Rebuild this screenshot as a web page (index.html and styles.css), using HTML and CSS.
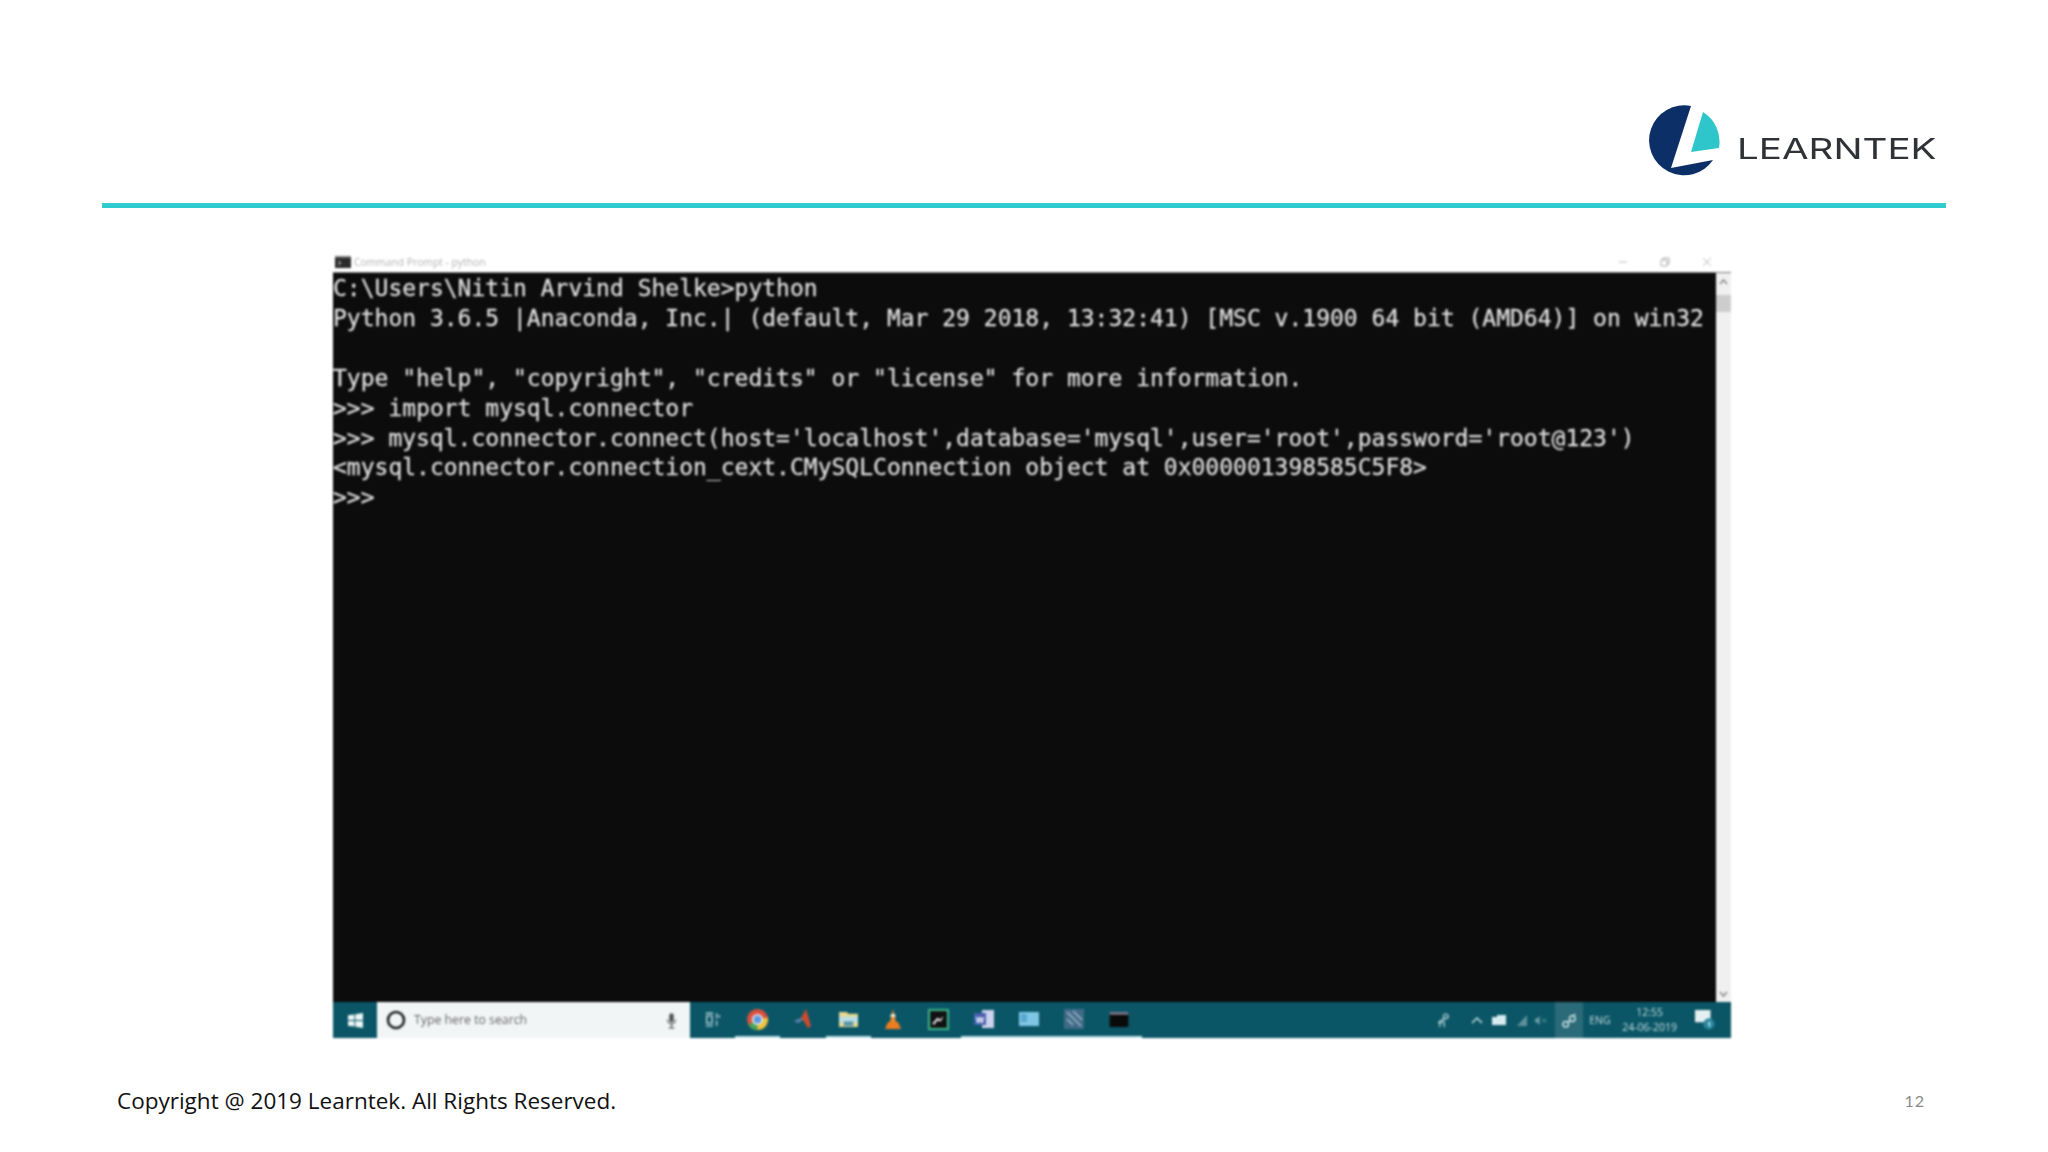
FILE: index.html
```html
<!DOCTYPE html>
<html lang="en">
<head>
<meta charset="utf-8">
<title>Learntek slide</title>
<link rel="stylesheet" href="styles.css">
</head>
<body>
<div class="slide">
  <header class="head">
    <div class="logo">
      <svg class="logo-mark" viewBox="0 0 72 72" width="72" height="72">
        <path fill="#0b2f66" d="M42 1A35 35 0 1 0 64 55L22 63Z"/>
        <path fill="#2fc6cb" d="M54 7A35 35 0 0 1 70 43L42 47Z"/>
      </svg>
      <span class="logo-text">LEARNTEK</span>
    </div>
  </header>
  <div class="rule"></div>

  <main class="shot-wrap">
    <div class="shot">
      <div class="titlebar">
        <svg class="cmd-icon" viewBox="0 0 16 12" width="16" height="12">
          <rect width="16" height="12" fill="#2a2a2a"/><rect y="0" width="16" height="2" fill="#777"/>
          <path d="M3 5l3 2-3 2" stroke="#ccc" stroke-width="1" fill="none"/>
        </svg>
        <span class="title-text">Command Prompt - python</span>
        <div class="win-ctrls">
          <svg viewBox="0 0 12 12" width="12" height="12"><path d="M2 6h8" stroke="#bbb"/></svg>
          <svg viewBox="0 0 12 12" width="12" height="12"><path d="M2 4h6v6H2zM4 4V2h6v6H8" stroke="#aaa" fill="none"/></svg>
          <svg viewBox="0 0 12 12" width="12" height="12"><path d="M2 2l8 8M10 2l-8 8" stroke="#bbb"/></svg>
        </div>
      </div>
      <div class="console">
        <pre class="terminal">C:\Users\Nitin Arvind Shelke&gt;python
Python 3.6.5 |Anaconda, Inc.| (default, Mar 29 2018, 13:32:41) [MSC v.1900 64 bit (AMD64)] on win32

Type "help", "copyright", "credits" or "license" for more information.
&gt;&gt;&gt; import mysql.connector
&gt;&gt;&gt; mysql.connector.connect(host='localhost',database='mysql',user='root',password='root@123')
&lt;mysql.connector.connection_cext.CMySQLConnection object at 0x000001398585C5F8&gt;
&gt;&gt;&gt;</pre>
        <div class="scrollbar">
          <svg viewBox="0 0 15 16" width="15" height="16"><path d="M4 10l3.500-4 3.500 4" stroke="#888" stroke-width="1.500" fill="none"/></svg>
          <div class="thumb"></div>
          <svg class="arrow-down" viewBox="0 0 15 16" width="15" height="16"><path d="M4 6l3.500 4 3.500-4" stroke="#888" stroke-width="1.500" fill="none"/></svg>
        </div>
      </div>
      <div class="taskbar">
        <div class="start">
          <svg viewBox="0 0 16 16" width="15" height="15"><path fill="#eef6f8" d="M0 2.500l6.800-1v6H0zM7.800 1.300L16 0v7.500H7.800zM0 8.500h6.800v6l-6.800-1zM7.800 8.500H16V16l-8.200-1.300z"/></svg>
        </div>
        <div class="search">
          <svg viewBox="0 0 20 20" width="20" height="20"><circle cx="10" cy="10" r="8" fill="none" stroke="#222" stroke-width="2.600"/></svg>
          <span class="search-text">Type here to search</span>
          <svg class="mic" viewBox="0 0 12 18" width="11" height="17"><rect x="3.500" y="1" width="5" height="10" rx="2.500" fill="#555"/><path d="M1.500 8a4.500 4.500 0 0 0 9 0M6 13v4M3 17h6" stroke="#555" fill="none" stroke-width="1.200"/></svg>
        </div>
        <div class="apps">
          <div class="app">
            <svg viewBox="0 0 20 16" width="18" height="15"><path d="M2 1h8M2 15h8M3 4h6v8H3zM14 1v6M14 9v6M17 3v3" stroke="#b8d5da" stroke-width="1.500" fill="none"/></svg>
          </div>
          <div class="app on">
            <svg viewBox="0 0 20 20" width="21" height="21"><circle cx="10" cy="10" r="10" fill="#d9503f"/><path d="M10 10L1.300 15A10 10 0 0 0 12 19.800Z" fill="#4aa357"/><path d="M10 10L19.800 8A10 10 0 0 1 10 20Z" fill="#eec33f"/><circle cx="10" cy="10" r="4.500" fill="#5c9be0" stroke="#eee" stroke-width="1.500"/></svg>
          </div>
          <div class="app">
            <svg viewBox="0 0 20 22" width="20" height="22"><path d="M1 13l7-3 5-9 5 17-3 2-5-8-5 3z" fill="#cf4a2c"/><path d="M1 13l7-3 2 2-5 3z" fill="#3f86b8"/></svg>
          </div>
          <div class="app on">
            <svg viewBox="0 0 22 18" width="21" height="17"><path d="M1 1h8l2 2h10v14H1z" fill="#e7d98f"/><rect x="1" y="6" width="20" height="6" fill="#b9dfe6"/><rect x="6" y="11" width="10" height="5" fill="#5a93a8"/></svg>
          </div>
          <div class="app">
            <svg viewBox="0 0 20 22" width="20" height="22"><path d="M10 1l3 13H7z" fill="#f0892a"/><path d="M8 6h4l.7 3H7.300z" fill="#f3e7d3"/><path d="M2 21l3-7h10l3 7z" fill="#ee7c1e"/></svg>
          </div>
          <div class="app">
            <svg viewBox="0 0 20 20" width="21" height="21"><rect width="20" height="20" fill="#3bb58a"/><rect x="2" y="2" width="16" height="16" fill="#111"/><path d="M4 14l5-6 2 2 4-3-3 5-3-1-3 4z" fill="#e9e9e9"/></svg>
          </div>
          <div class="app on">
            <svg viewBox="0 0 20 18" width="20" height="18"><rect x="8" y="0" width="12" height="18" fill="#ccd3ec"/><rect x="0" y="3" width="12" height="12" fill="#4a5fb0"/><text class="word-w" x="2" y="13">w</text></svg>
          </div>
          <div class="app on">
            <svg viewBox="0 0 20 14" width="20" height="14"><rect width="20" height="14" fill="#7fc6e6"/><rect x="2" y="2" width="6" height="8" fill="#58a8d0"/></svg>
          </div>
          <div class="app on">
            <svg viewBox="0 0 20 20" width="20" height="20"><rect width="20" height="20" fill="#3f6a86"/><path d="M3 3l14 14M9 2l9 9M3 10l6 6" stroke="#8ba6bc" stroke-width="2"/></svg>
          </div>
          <div class="app on">
            <svg viewBox="0 0 20 16" width="20" height="15"><rect width="20" height="16" fill="#0a0a0a"/><rect width="20" height="3" fill="#778"/></svg>
          </div>
        </div>
        <div class="tray">
          <svg class="tray-person" viewBox="0 0 14 16" width="13" height="15"><circle cx="9.500" cy="3.500" r="2.500" fill="none" stroke="#c6dde1" stroke-width="1.300"/><path d="M7 6L3 9v6M7 7l1 8M1 10h5" stroke="#c6dde1" stroke-width="1.300" fill="none"/></svg>
          <svg class="tray-up" viewBox="0 0 12 8" width="12" height="8"><path d="M1 7l5-5 5 5" stroke="#c6dde1" stroke-width="1.500" fill="none"/></svg>
          <svg class="tray-bat" viewBox="0 0 14 10" width="14" height="10"><rect width="14" height="10" fill="#d8ecef"/><rect y="0" width="5" height="2" fill="#0b5666"/></svg>
          <svg class="tray-net" viewBox="0 0 12 12" width="12" height="12"><path d="M1 12L11 1v11z" fill="#5f909a"/></svg>
          <svg class="tray-vol" viewBox="0 0 14 12" width="13" height="11"><path d="M1 4h2l3-3v10L3 8H1z" fill="#6f9fa9"/><path d="M9 4l4 4M13 4l-4 4" stroke="#6f9fa9"/></svg>
          <div class="tray-active">
            <svg viewBox="0 0 16 16" width="15" height="15"><circle cx="4" cy="12" r="3" fill="none" stroke="#d3e6e9" stroke-width="1.500"/><circle cx="11" cy="6" r="3" fill="none" stroke="#d3e6e9" stroke-width="1.500"/><path d="M6 10l3-2M12 3l2-2" stroke="#d3e6e9" stroke-width="1.500"/></svg>
          </div>
          <span class="eng">ENG</span>
          <div class="clock"><span>12:55</span><span>24-06-2019</span></div>
          <div class="notif">
            <svg viewBox="0 0 18 18" width="20" height="20"><rect x="0" y="0" width="14" height="11" fill="#e6f0f2"/><circle cx="12.500" cy="12.500" r="5" fill="#2b87a0"/><text class="notif-n" x="11" y="15">1</text></svg>
          </div>
        </div>
      </div>
    </div>
  </main>

  <footer class="foot">
    <span class="copy">Copyright @ 2019 Learntek. All Rights Reserved.</span>
    <span class="page-no">12</span>
  </footer>
</div>
</body>
</html>
```
FILE: styles.css
```css
* { box-sizing: border-box; }
html, body { margin: 0; padding: 0; background: #fff; }
.slide {
  width: 2048px;
  height: 1152px;
  display: flex;
  flex-direction: column;
  overflow: hidden;
}
.head {
  height: 203px;
  padding: 105px 112px 0 0;
  display: flex;
  justify-content: flex-end;
}
.logo { display: flex; align-items: flex-start; height: 72px; filter: blur(.6px); }
.logo-mark { display: block; }
.logo-text {
  margin: 25px 0 0 16px;
  width: 199px;
  font: 400 29px/38px "Inter", sans-serif;
  color: #2f3237;
  white-space: nowrap;
  transform: scaleX(1.33);
  transform-origin: left center;
}
.rule { height: 5px; margin: 0 102px; background: #2fcbce; }

.shot-wrap { padding: 43px 317px 0 333px; }
.shot { width: 1398px; height: 787px; display: flex; flex-direction: column; filter: blur(.8px); }

.titlebar {
  height: 22px;
  flex: none;
  display: flex;
  align-items: center;
  padding: 0 0 0 2px;
  border-bottom: 1px solid #777;
}
.cmd-icon { flex: none; }
.title-text {
  margin-left: 3px;
  font: 400 10.3px/14px "Open Sans", sans-serif;
  color: #b4b4b4;
}
.win-ctrls { margin-left: auto; display: flex; gap: 30px; padding-right: 18px; }

.console { flex: 1; min-height: 0; display: flex; background: #0c0c0c; }
.terminal {
  flex: 1;
  margin: 0;
  padding: 1px 0 0 0;
  font: 400 23px/29.9px "DejaVu Sans Mono", monospace;
  color: #dedede;
  -webkit-text-stroke: .3px #dedede;
  overflow: hidden;
  white-space: pre;
}
.scrollbar {
  flex: none;
  width: 15px;
  background: #f0f0f0;
  display: flex;
  flex-direction: column;
  padding-top: 1px;
}
.thumb { height: 17px; margin-top: 5px; background: #cdcdcd; }
.arrow-down { margin-top: auto; }

.taskbar {
  height: 36px;
  flex: none;
  display: flex;
  align-items: stretch;
  background: #0b5666;
  color: #c6dde1;
}
.start { width: 44px; display: flex; align-items: center; justify-content: center; }
.search {
  width: 313px;
  background: #f2f5f6;
  display: flex;
  align-items: center;
  padding: 0 13px 0 9px;
}
.search-text {
  margin-left: 8px;
  font: 400 12.3px/16px "Open Sans", sans-serif;
  color: #666;
}
.mic { margin-left: auto; }
.apps { display: flex; }
.app {
  width: 45.2px;
  display: flex;
  align-items: center;
  justify-content: center;
  border-bottom: 2px solid transparent;
}
.app.on { border-bottom-color: #bfe0e6; }
.word-w { font: 700 10px "Liberation Sans", sans-serif; fill: #fff; }
.tray { margin-left: auto; display: flex; align-items: center; padding-right: 16px; }
.tray-up { margin-left: 21px; }
.tray-bat { margin-left: 9px; }
.tray-net { margin-left: 10px; }
.tray-vol { margin-left: 6px; }
.tray-active {
  margin-left: 8px;
  width: 28px;
  align-self: stretch;
  background: #2b6a78;
  display: flex;
  align-items: center;
  justify-content: center;
}
.eng { margin-left: 6px; font: 400 10.5px/12px "Open Sans", sans-serif; width: 22px; }
.clock {
  margin-left: 11px;
  display: flex;
  flex-direction: column;
  align-items: center;
  font: 400 10.5px/15px "Open Sans", sans-serif;
  white-space: nowrap;
}
.notif { margin-left: 18px; display: flex; }
.notif-n { font: 700 6px "Open Sans", sans-serif; fill: #dff; }

.foot {
  flex: 1;
  display: flex;
  align-items: flex-start;
  justify-content: space-between;
  padding: 47px 123px 0 117px;
}
.copy { font: 400 22.5px/32px "Open Sans", sans-serif; color: #111; }
.page-no {
  margin-top: 6px;
  font: 400 16px/20px "Lato", sans-serif;
  color: #8a8a8a;
  letter-spacing: 1px;
}
```
